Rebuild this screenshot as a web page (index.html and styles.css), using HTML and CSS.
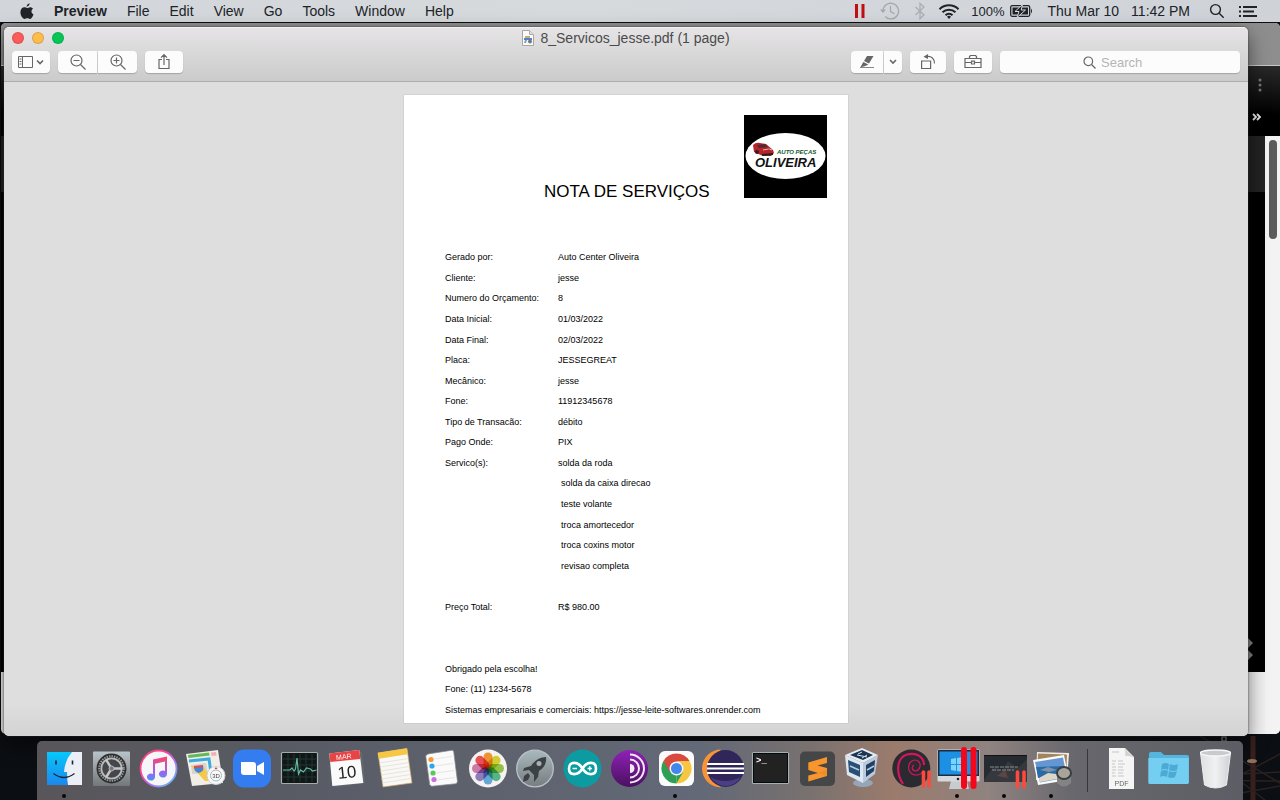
FILE: index.html
```html
<!DOCTYPE html>
<html lang="en">
<head>
<meta charset="utf-8">
<title>8_Servicos_jesse.pdf (1 page)</title>
<link rel="stylesheet" href="styles.css">
</head>
<body>
<header class="menubar">
  <nav class="menus" aria-label="Application menu">
    <button class="menu apple" aria-label="Apple menu"><svg width="14" height="17" viewBox="0 0 14 17"><path fill="#222428" d="M9.600 0.300C9.700 1.900 8.300 3.700 6.700 3.700 6.500 2.100 8 0.500 9.600 0.300ZM10 4.200C11.300 4.200 12.500 4.900 13.100 5.800 10.800 7.200 11 10.300 13.500 11.400 13 13 11.600 15.800 10 15.900 8.900 15.900 8.600 15.300 7.300 15.300 6 15.300 5.600 15.900 4.600 15.900 2.500 15.900 0.400 12.300 0.400 9.300 0.400 6.200 2.300 4.300 4.400 4.300 5.600 4.300 6.400 5 7.200 5 8 5 8.800 4.200 10 4.200Z"/></svg></button>
    <button class="menu app">Preview</button>
    <button class="menu">File</button>
    <button class="menu">Edit</button>
    <button class="menu">View</button>
    <button class="menu">Go</button>
    <button class="menu">Tools</button>
    <button class="menu">Window</button>
    <button class="menu">Help</button>
  </nav>
  <div class="status">
    <svg width="12" height="18" viewBox="0 0 12 18"><path d="M2.500 2v14M9 2v14" stroke="#c40d12" stroke-width="3"/></svg>
    <svg class="history" width="20" height="18" viewBox="0 0 20 18" fill="none" stroke="#a5a8ac" stroke-width="1.300"><path d="M3 9a7.800 7.800 0 1 1 2.200 5.500M10.500 4v5.500l4 2.200"/><path d="M0 7.500h6L3 11z" fill="#a5a8ac" stroke="none"/></svg>
    <svg class="bluetooth" width="12" height="18" viewBox="0 0 12 18" fill="none" stroke="#abafb4" stroke-width="1.300"><path d="M1.500 5 10 13 6 16.500V1.500L10 5 1.500 13"/></svg>
    <svg class="wifi" width="22" height="17" viewBox="0 0 22 17" fill="none" stroke="#202328" stroke-width="2"><path d="M1.500 6.200a13.500 13.500 0 0 1 19 0M4.500 9.300a9.300 9.300 0 0 1 13 0M7.500 12.300a5 5 0 0 1 7 0"/><path d="m11 16-2-2.300a3 3 0 0 1 4 0z" fill="#202328" stroke="none"/></svg>
    <span class="percent">100%</span>
    <svg class="battery" width="24" height="14" viewBox="0 0 24 14"><rect x=".7" y="1.700" width="19" height="10.600" rx="1.500" fill="none" stroke="#202328" stroke-width="1.300"/><path d="M2.500 3.500h15.500v7H2.500z" fill="#202328"/><path d="M21 4.500q2 2.500 0 5z" fill="#202328"/><path d="M12.500.5 5 7.500h4L7 13.500l8.500-7.500h-4.300z" fill="#202328" stroke="#d4d7da" stroke-width="1"/></svg>
    <time class="clock"><span>Thu Mar 10</span><span>11:42 PM</span></time>
    <button class="menu" aria-label="Spotlight"><svg width="16" height="16" viewBox="0 0 16 16" fill="none" stroke="#202328" stroke-width="1.400"><circle cx="6.500" cy="6.500" r="4.900"/><path d="m10.200 10.200 4.500 4.500"/></svg></button>
    <button class="menu center" aria-label="Notification Center"><svg width="18" height="12" viewBox="0 0 18 12" stroke="#202328" stroke-width="1.800"><path d="M0 2h2M4 2h14M0 6.500h2M4 6.500h11M0 11h2M4 11h14"/></svg></button>
  </div>
</header>

<main class="desktop">
  <svg class="pylon" width="100" height="64" viewBox="0 0 100 64" fill="none" stroke="#2b211e" stroke-width="1.500"><path d="M73 0v64" stroke="#3a201b" stroke-width="5"/><path d="M20 0 100 47M100 18 40 50M0 41 100 36M0 44 100 45M20 64 100 50M48 36 85 64"/><ellipse cx="72" cy="25" rx="5" ry="2" fill="#8d7059" stroke="none"/><path d="M42 1h4v4h-4z" stroke="#73777b"/></svg>

  <section class="browser" aria-label="Browser">
    <div class="tabs"></div>
    <div class="bars">
      <svg width="4" height="14" viewBox="0 0 4 14" fill="#777"><circle cx="2" cy="2" r="1.500"/><circle cx="2" cy="7" r="1.500"/><circle cx="2" cy="12" r="1.500"/></svg>
      <svg class="more" width="10" height="8" viewBox="0 0 10 8" fill="none" stroke="#e8e8e8" stroke-width="1.800"><path d="m1 1 3 3-3 3m4-6 3 3-3 3"/></svg>
    </div>
    <div class="site">
      <div class="view"><div class="banner"></div><div class="hero"><svg width="8" height="24" viewBox="0 0 8 24" fill="#858585"><path d="m0 0 6 6-6 6zM0 12l6 6-6 6z"/></svg></div></div>
      <div class="track"><div class="thumb"></div></div>
    </div>
  </section>

  <section class="window" aria-label="Preview">
    <div class="chrome">
      <div class="titlebar">
        <div class="lights"><button class="light close" aria-label="Close"></button><button class="light minimize" aria-label="Minimize"></button><button class="light expand" aria-label="Full screen"></button></div>
        <h1 class="title"><svg width="12" height="16" viewBox="0 0 12 16"><path d="M.5.500h7l4 4v11H.5z" fill="#fafafa" stroke="#a7a7a7"/><path d="M7.500.500v4h4" fill="#ddd" stroke="#aaa"/><path d="M3 6h5v2H3z" fill="#cba878"/><path d="M2 8h8v2H2z" fill="#5682c3"/><path d="m3 10 2 0-1 3H2z" fill="#7b9cc7"/><circle cx="8" cy="11.500" r="2" fill="#737880"/></svg>8_Servicos_jesse.pdf (1 page)</h1>
      </div>
      <div class="toolbar">
        <button class="tool" aria-label="Sidebar"><svg width="28" height="16" viewBox="0 0 28 16" fill="none" stroke="#666"><path d="M1.500 2.500h14v11h-14zM5.500 2.500v11M2.500 5h2M2.500 7.500h2M2.500 10h2"/><path d="m20 6.500 3 3 3-3" stroke-width="1.600"/></svg></button>
        <div class="pair">
          <button class="tool" aria-label="Zoom out"><svg width="16" height="16" viewBox="0 0 16 16" fill="none" stroke="#666" stroke-width="1.200"><circle cx="6.500" cy="6.500" r="5.500"/><path d="m10.500 10.500 5 5M3.500 6.500h6"/></svg></button>
          <button class="tool" aria-label="Zoom in"><svg width="16" height="16" viewBox="0 0 16 16" fill="none" stroke="#666" stroke-width="1.200"><circle cx="6.500" cy="6.500" r="5.500"/><path d="m10.500 10.500 5 5M3.500 6.500h6M6.500 3.500v6"/></svg></button>
        </div>
        <button class="tool" aria-label="Share"><svg width="14" height="18" viewBox="0 0 14 18" fill="none" stroke="#666" stroke-width="1.200"><path d="M5 6.500H2v9h10v-9H9M7 12V2M4 4.700l3-3 3 3"/></svg></button>
        <span class="spring"></span>
        <div class="pair">
          <button class="tool pen" aria-label="Highlight"><svg width="18" height="16" viewBox="0 0 18 16"><path d="M2 13.500h14" stroke="#8a8a8a"/><path d="M9 2h6.500L11 9.500 6 7z" fill="#666"/><path d="m5.300 8 5 2.500-3 1.500-5 1.500z" fill="#666"/></svg></button>
          <button class="tool drop" aria-label="Highlight colours"><svg width="8" height="6" viewBox="0 0 8 6" fill="none" stroke="#666" stroke-width="1.600"><path d="m1 1 3 3 3-3"/></svg></button>
        </div>
        <button class="tool rotate" aria-label="Rotate"><svg width="16" height="18" viewBox="0 0 16 18" fill="none" stroke="#666" stroke-width="1.200"><path d="M1.600 8h9v7.500h-9zM7 3.500c4.500-.5 7.500 2 7.500 7"/><path d="M3.500 3.700 8 1v5z" fill="#666" stroke="none"/></svg></button>
        <button class="tool" aria-label="Markup toolbar"><svg width="18" height="16" viewBox="0 0 18 16" fill="none" stroke="#666" stroke-width="1.200"><path d="M1 4.500h16v9H1zM5.500 4.500v-2l1-1h5l1 1v2M1 8.500h6.500m3 0H17M7.500 7.200h3V10h-3z"/></svg></button>
        <label class="search"><svg width="13" height="13" viewBox="0 0 13 13" fill="none" stroke="#666" stroke-width="1.200"><circle cx="5.300" cy="5.300" r="4.300"/><path d="m8.500 8.500 4 4"/></svg><input type="text" placeholder="Search" aria-label="Search"></label>
      </div>
    </div>
    <div class="canvas">
      <article class="sheet" lang="pt">
        <div class="heading">
          <svg class="logo" width="83" height="83" viewBox="0 0 83 83" role="img" aria-label="Auto Peças Oliveira"><path d="M0 0h83v83H0z"/><ellipse cx="41.500" cy="41" rx="40" ry="23" fill="#fff"/><path d="M9 30q3-3 7-2l6 1 7 6 1 3-3 3-8 0-9-4z" fill="#b92229"/><path d="m13 30 8-1 3 3-9 1z" fill="#4a2c32"/><path d="m19 35 6-1 3 1" stroke="#f0b7b5"/><circle cx="13" cy="37" r="2" fill="#331f21"/><path d="m18 40 11-1" stroke="#222" stroke-width="2"/><text x="33" y="39" class="brand-small">AUTO PEÇAS</text><text x="11" y="52" class="brand">OLIVEIRA</text></svg>
          <h2>NOTA DE SERVIÇOS</h2>
        </div>
        <dl class="details">
          <dt>Gerado por:</dt><dd>Auto Center Oliveira</dd>
          <dt>Cliente:</dt><dd>jesse</dd>
          <dt>Numero do Orçamento:</dt><dd>8</dd>
          <dt>Data Inicial:</dt><dd>01/03/2022</dd>
          <dt>Data Final:</dt><dd>02/03/2022</dd>
          <dt>Placa:</dt><dd>JESSEGREAT</dd>
          <dt>Mecânico:</dt><dd>jesse</dd>
          <dt>Fone:</dt><dd>11912345678</dd>
          <dt>Tipo de Transacão:</dt><dd>débito</dd>
          <dt>Pago Onde:</dt><dd>PIX</dd>
          <dt>Servico(s):</dt><dd>solda da roda</dd>
          <dd class="extra">solda da caixa direcao</dd>
          <dd class="extra">teste volante</dd>
          <dd class="extra">troca amortecedor</dd>
          <dd class="extra">troca coxins motor</dd>
          <dd class="extra">revisao completa</dd>
          <dt class="total">Preço Total:</dt><dd>R$ 980.00</dd>
        </dl>
        <footer class="notes">
          <p>Obrigado pela escolha!</p>
          <p>Fone: (11) 1234-5678</p>
          <p>Sistemas empresariais e comerciais: https://jesse-leite-softwares.onrender.com</p>
        </footer>
      </article>
    </div>
  </section>

  <nav class="dock" aria-label="Dock">
    <button class="app-icon running" aria-label="Finder"><svg viewBox="0 0 47 59"><defs><linearGradient id="finder" x2="0" y2="1"><stop stop-color="#06c8fa"/><stop offset="1" stop-color="#1c87ee"/></linearGradient></defs><path d="M6 11h35v33H6z" fill="url(#finder)"/><path d="M31 11h10v33H27q-1-5-1-13h-3q1-12 8-20z" fill="#eceff5"/><path d="M15 19.500v4M31.500 19.500v4" stroke="#17263d" stroke-width="1.600"/><path d="M12.500 32.500q10.500 8 21 0" fill="none" stroke="#17263d" stroke-width="1.300"/></svg></button>
    <button class="app-icon" aria-label="System Preferences"><svg viewBox="0 0 47 59"><defs><linearGradient id="prefs" x2="0" y2="1"><stop stop-color="#b9c4ca"/><stop offset="1" stop-color="#73777a"/></linearGradient></defs><rect x="5" y="10.500" width="37" height="34.500" rx="1" fill="url(#prefs)"/><circle cx="23.500" cy="27.500" r="15" fill="#2c2e30"/><circle cx="23.500" cy="27.500" r="12.300" fill="none" stroke="#999" stroke-width="2" stroke-dasharray="1.500 1"/><circle cx="23.500" cy="27.500" r="10.200" fill="#43464a" stroke="#bbb" stroke-width="1.800"/><path d="M23.500 27.500 18 18.500m5.500 9h11m-11 0-5.500 9" stroke="#c5c5c5" stroke-width="2.400"/><circle cx="23.500" cy="27.500" r="2.500" fill="#777" stroke="#bbb"/></svg></button>
    <button class="app-icon" aria-label="iTunes"><svg viewBox="0 0 47 59"><defs><linearGradient id="ring" x2="1" y2="1"><stop stop-color="#f04d72"/><stop offset=".35" stop-color="#ff3e9c"/><stop offset=".6" stop-color="#b26cf2"/><stop offset="1" stop-color="#4ccafa"/></linearGradient><linearGradient id="note" x2="0" y2="1"><stop stop-color="#fb4568"/><stop offset=".6" stop-color="#a85cec"/><stop offset="1" stop-color="#4a94f5"/></linearGradient></defs><circle cx="23.500" cy="27.500" r="18" fill="#f6f5f8" stroke="url(#ring)" stroke-width="1.800"/><path fill="url(#note)" d="M18 18.500 32 15.500V33a4 3.500 0 1 1-2-3V20.500L20 22.700V36a4 3.500 0 1 1-2-3z"/></svg></button>
    <button class="app-icon" aria-label="Maps"><svg viewBox="0 0 47 59"><path d="m4 13 32-4 5 33-31 3z" fill="#f1eee5"/><path d="m6 14 21-2.500.6 3L6.500 17z" fill="#62b955"/><path d="m29 11.500 5-.6.6 3.500-5 .6z" fill="#f1adba"/><path d="m7 20 20-2 3 21" fill="none" stroke="#3babdf" stroke-width="3"/><path d="m9 24 15-2 2 10-16 1z" fill="#d8d4ca"/><path d="m9 25 14 15 8 0-9-13z" fill="#f5c944"/><path d="m12 26 9-1q2 5-4 7-5-1-5-6z" fill="#4784d8"/><path d="m12 26 9-1" stroke="#de4a4e" stroke-width="2"/><circle cx="34" cy="34.500" r="9" fill="#f8f8f8" stroke="#cfd1d2"/><circle cx="34" cy="34.500" r="5.500" fill="none" stroke="#9cbac9"/><path d="m32.500 28 1.500-2 1.500 2z" fill="#e33"/><text x="34" y="37" class="three">3D</text></svg></button>
    <button class="app-icon" aria-label="Zoom"><svg viewBox="0 0 47 59"><rect x="4" y="8.500" width="38" height="38" rx="11" fill="#347df0"/><path d="M12 21h12a3 3 0 0 1 3 3v10H15a3 3 0 0 1-3-3z" fill="#fff"/><path d="m28 25 7-4v13l-7-4z" fill="#fff"/></svg></button>
    <button class="app-icon" aria-label="Activity Monitor"><svg viewBox="0 0 47 59"><rect x="5.500" y="11.500" width="36" height="31" rx="1" fill="#101716" stroke="#a5adac" stroke-width="1.200"/><path d="M12 13v28M18 13v28M24 13v28M30 13v28M36 13v28M7 18h33M7 24h33M7 30h33M7 36h33" stroke="#29443f" stroke-width=".7"/><path d="m7 29 7 0 2-2 2 3 1.500-2L21 17l1.500 16 2-4 3 2 3-4 4 1 2 2 4-1" fill="none" stroke="#65b9a4" stroke-width="1.200"/></svg></button>
    <button class="app-icon" aria-label="Calendar"><svg viewBox="0 0 47 59"><path d="m37 11 2 0 3 31-31 4-2-2z" fill="#646a6c"/><path d="m6.300 12.500 30-3.500 4 33-31 3z" fill="#fafafa"/><path d="m6.300 12.500 30-3.500 1 9-30 3z" fill="#e84445"/><g transform="rotate(-6 23 27)"><text x="22" y="18" class="month">MAR</text><text x="23.500" y="37" class="day">10</text></g></svg></button>
    <button class="app-icon" aria-label="Notes"><svg viewBox="0 0 47 59"><path d="m8 12 29-4.500 5 34.500-29 4z" fill="#f9f8f5" stroke="#c3a35b" stroke-width=".7"/><path d="m7.700 11.700 29-4.500 1 6-29 4.500z" fill="#f6c744"/><path d="m9.300 22 29-4.500M10 26l29-4.500M10.500 30l29-4.500M11 34l29-4.500M11.500 38l29-4.500M12 42l29-4.500" stroke="#dddbd8" stroke-width=".7"/></svg></button>
    <button class="app-icon" aria-label="Reminders"><svg viewBox="0 0 47 59"><path d="m11 13 24-3.800q1.500 0 1.700 1.500l3.800 30-1.300 2-24.500 2.600-2-1.600-4-29z" fill="#fafafa" stroke="#888" stroke-width=".7"/><g stroke="#ddd" stroke-width=".7"><path d="m17 18 18-2.500M18 25l18-2.500M19 32l18-2.500M20 39l18-2.500"/></g><circle cx="14" cy="18.500" r="2.600" fill="#f59836"/><circle cx="15" cy="25" r="2.600" fill="#28a9ed"/><circle cx="16" cy="32" r="2.600" fill="#57ca59"/><circle cx="17" cy="38.500" r="2.600" fill="#cc6ee0"/></svg></button>
    <button class="app-icon" aria-label="Photos"><svg viewBox="0 0 47 59"><circle cx="24" cy="27.500" r="19" fill="#f4f3f1"/><g class="petals"><rect x="19.500" y="11.500" width="9" height="16" rx="4.500" fill="#f89b35"/><rect x="19.500" y="11.500" width="9" height="16" rx="4.500" fill="#dbd735" transform="rotate(45 24 27.500)"/><rect x="19.500" y="11.500" width="9" height="16" rx="4.500" fill="#9aca4d" transform="rotate(90 24 27.500)"/><rect x="19.500" y="11.500" width="9" height="16" rx="4.500" fill="#5bbd91" transform="rotate(135 24 27.500)"/><rect x="19.500" y="11.500" width="9" height="16" rx="4.500" fill="#6bafe0" transform="rotate(180 24 27.500)"/><rect x="19.500" y="11.500" width="9" height="16" rx="4.500" fill="#9582c5" transform="rotate(225 24 27.500)"/><rect x="19.500" y="11.500" width="9" height="16" rx="4.500" fill="#d481b5" transform="rotate(270 24 27.500)"/><rect x="19.500" y="11.500" width="9" height="16" rx="4.500" fill="#f0545b" transform="rotate(315 24 27.500)"/></g></svg></button>
    <button class="app-icon" aria-label="Launchpad"><svg viewBox="0 0 47 59"><defs><linearGradient id="launch" x2="0" y2="1"><stop stop-color="#a9b8bd"/><stop offset="1" stop-color="#777d80"/></linearGradient></defs><circle cx="24" cy="27.500" r="18.300" fill="url(#launch)" stroke="#b9c2c8" stroke-width="1.300"/><path d="M35 16q-9 0-15 9l-7 2-1 3 6-1 5 5 0 7 4-5 1-6q8-5 7-14z" fill="#3c4146"/><path d="m17 32-4 3-1 6 5-2 2-4z" fill="#3c4146"/><circle cx="28" cy="22.500" r="2.500" fill="#a9b0b3"/></svg></button>
    <button class="app-icon" aria-label="Arduino"><svg viewBox="0 0 47 59"><circle cx="24.500" cy="27.500" r="19" fill="#0c9ba0"/><path d="M24.500 27.500C20 20 11 20 11 27.500S20 35 24.500 27.500 38 20 38 27.500 29 35 24.500 27.500z" fill="none" stroke="#fff" stroke-width="2.600"/><path d="M14.500 27.500h4.500m10.500 0h4.500M31.800 25.300v4.500" stroke="#fff" stroke-width="1.400"/></svg></button>
    <button class="app-icon" aria-label="Tor Browser"><svg viewBox="0 0 47 59"><defs><linearGradient id="tor" x2="0" y2="1"><stop stop-color="#9021b5"/><stop offset="1" stop-color="#491060"/></linearGradient></defs><circle cx="24.500" cy="27.500" r="18.500" fill="url(#tor)"/><g fill="none" stroke="#f3e8f7" stroke-width="2"><path d="M25 13.500a14 14 0 0 1 0 28M25 18.500a9 9 0 0 1 0 18"/></g><path d="M25 23a4.500 4.500 0 0 1 0 9z" fill="#f3e8f7"/></svg></button>
    <button class="app-icon running" aria-label="Chrome"><svg viewBox="0 0 47 59"><rect x="7" y="10" width="35" height="35" rx="6" fill="#fbfbfb"/><path d="M24.500 27.500 11.500 20a15 15 0 0 1 26 0z" fill="#d84a3e"/><path d="M24.500 27.500 37.500 20a15 15 0 0 1-13 22.500z" fill="#f7c640"/><path d="M24.500 27.500 24.500 42.500a15 15 0 0 1-13-22.500z" fill="#2f9f57"/><path d="M24.500 20h13l-4.500 5z" fill="#f7c640"/><path d="M18 31.200 11.500 20l6.500 3z" fill="#d84a3e"/><path d="M31 31.200 24.500 42.500V34z" fill="#2f9f57"/><circle cx="24.500" cy="27.500" r="7" fill="#f6f6f6"/><circle cx="24.500" cy="27.500" r="5.500" fill="#4387ed"/></svg></button>
    <button class="app-icon" aria-label="Eclipse"><svg viewBox="0 0 47 59"><path d="M22 8.500a19 19 0 0 0 0 38 25 25 0 0 1 0-38z" fill="#f79438"/><circle cx="26.500" cy="27.500" r="18.500" fill="#30265a"/><path d="M11 36q15 8 31 0-6 9-15 9t-16-9z" fill="#4c3e84"/><path d="M8 23h37M8 27.500h37M8 32h37" stroke="#fff" stroke-width="2.200"/></svg></button>
    <button class="app-icon" aria-label="Terminal"><svg viewBox="0 0 47 59"><rect x="6.500" y="11.500" width="36" height="31" rx="1" fill="#222" stroke="#a5b0b5" stroke-width="1.200"/><rect x="7.500" y="12.500" width="34" height="29" fill="none" stroke="#090909"/><text x="10" y="22" class="prompt">&gt;_</text></svg></button>
    <button class="app-icon" aria-label="Sublime Text"><svg viewBox="0 0 47 59"><rect x="7" y="10.500" width="35" height="34.500" rx="5" fill="#454647"/><path d="M34 16 15.300 21.500V29L25 32l-9.700 2.500v6L34 35v-8l-9.500-2.500L34 22z" fill="#f8952e"/><path d="m25 32 9-3v6l-6-2z" fill="#de7a1f" opacity=".35"/></svg></button>
    <button class="app-icon" aria-label="VirtualBox"><svg viewBox="0 0 47 59"><ellipse cx="23" cy="42" rx="10" ry="4" fill="#97a5b9"/><path d="m5 14 17-7 16 7-15 8z" fill="#e5edf5"/><path d="m10 14 12-5 11 5-10 5z" fill="#1b3552"/><path d="m18 13 4-2m0 6 5-3m-10 0 10 2" stroke="#dce6ef"/><path d="m5 14 18 8v20L7 34z" fill="#dde7f0"/><path d="m38 14-15 8v20l12-9z" fill="#b9cade"/><path d="m8 19 12 5v12L9 31z" fill="#284f75"/><path d="m35 19-9 5v12l8-6z" fill="#203f62"/><path d="m10 25 9 4m8 0 7-4" stroke="#b9cad9" stroke-width="1.500"/></svg></button>
    <button class="app-icon" aria-label="Debian"><svg viewBox="0 0 47 59"><circle cx="24.300" cy="27.500" r="19" fill="#292b31"/><path d="M16 43C9 32 9 17 20 13.500 30 11 37 16 37 24" fill="none" stroke="#d5155d" stroke-width="2.200"/><path d="M36 30C33 36 24 35 22 29 20 22 26 17 31 20 35 23 33 29 29 30 25 30 24 26 27 24" fill="none" stroke="#d5155d" stroke-width="1.200"/><path d="M36.500 31v14M42 31v14" stroke="#fb4a3e" stroke-width="3.600" stroke-linecap="round"/></svg></button>
    <button class="app-icon running" aria-label="Windows"><svg viewBox="0 0 47 59"><path d="M17 40h16l2 8H15z" fill="#c8cbd0"/><rect x="3.500" y="8.500" width="42" height="32" rx="1" fill="#d5d9dd"/><path d="M4 9h41v26H4z" fill="#1c2c40"/><path d="M5.500 10.500h38v23h-38z" fill="#1d90e3"/><path d="m17 18 5-1v6h-5zm6-1 6-1v7h-6zm-6 7h5v6l-5-1zm6 0h6v7l-6-1z" fill="#7ed3fb"/><circle cx="24" cy="38" r="1.300" fill="#222"/><path d="M30 9v36M39.500 9v36" stroke="#f5061a" stroke-width="6" stroke-linecap="round"/></svg></button>
    <button class="app-icon running" aria-label="Virtual machine"><svg viewBox="0 0 47 59"><path d="M3 14h43v27H3z" fill="#252b31"/><path d="m3 39 10-14 8 5 6-10 10 7 9-9v23H3z" fill="#35383d"/><path d="m16 35 8-6 3 8z" fill="#5c4542"/><path d="M9 26h28M11 29h22" stroke="#858b8f" stroke-dasharray="4 1"/><path d="M3 14.500h43" stroke="#111"/><path d="M36.500 31v15M43 31v15" stroke="#fb4a3e" stroke-width="3.600" stroke-linecap="round"/></svg></button>
    <button class="app-icon running" aria-label="Preview"><svg viewBox="0 0 47 59"><path d="m9 11 32 1-2 28-31-1z" fill="#f1eee8"/><path d="m10 12.500 29 1-1 25-29-1z" fill="#a1855f"/><path d="m5 19 31-5 5 25-31 5z" fill="#fafafa"/><path d="m7 21 28-4.500 4 20-27 5z" fill="#6497d2"/><path d="m8 26 28-1 2 7-28 5z" fill="#286ba8"/><path d="m11 37 9-5 8 1 10-1 1 4-27 5z" fill="#ded6c4"/><path d="m12 29 8-3 9 3-8 2z" fill="#8092a7"/><path d="M29 31v11q7 7 14 0V31z" fill="#838383"/><ellipse cx="36" cy="32" rx="7" ry="6" fill="#a7a59b" stroke="#393c40" stroke-width="2"/></svg></button>
    <span class="separator"></span>
    <button class="app-icon" aria-label="PDF document"><svg viewBox="0 0 47 59"><path d="M11 7h16l9 9v32H11z" fill="#f5f5f5"/><path d="m26 7 10 10q-5-3-9-2 1-5-1-8z" fill="#d1d1d1"/><path d="M14 11h7M14 20h4m2 0h5M14 23h3m3 0h7M14 26h4m2 0h5M14 29h4m2 0h6M14 32h3m3 0h5M14 35h4m2 0h6" stroke="#bbb" stroke-width=".8"/><text x="23.500" y="45" class="pdf">PDF</text></svg></button>
    <button class="app-icon" aria-label="Windows folder"><svg viewBox="0 0 47 59"><path d="M4 13q0-2 2-2h10l3 3h23q2 0 2 2v26H4z" fill="#55b5df"/><path d="M3.300 17h40.400v24.500q0 1.500-1.500 1.500H4.800q-1.500 0-1.500-1.500z" fill="#74cef2"/><path d="m17 23q4-2 7 0l-1 6q-4-2-7 0zm8 0q4 2 8 0l-1 6q-4 2-8 0zm-9 7q4-2 7 0l-1 6q-4-2-7 0zm8 0q4 2 8 0l-2 6q-4 2-7 0z" fill="#4daad4"/></svg></button>
    <button class="app-icon" aria-label="Trash"><svg viewBox="0 0 47 59"><defs><linearGradient id="bin"><stop stop-color="#dee0e3"/><stop offset=".5" stop-color="#f0f1f2"/><stop offset="1" stop-color="#ced0d4"/></linearGradient></defs><path d="m8.500 12 4 32q11 6 22 0l4-32z" fill="url(#bin)" stroke="#eceef0"/><ellipse cx="23.500" cy="12" rx="15" ry="3" fill="#c8cace" stroke="#f7f7f7" stroke-width="1.300"/></svg></button>
  </nav>
</main>
</body>
</html>
```

FILE: styles.css
```css
* { box-sizing: border-box; }

body {
  margin: 0;
  height: 100vh;
  display: flex;
  flex-direction: column;
  overflow: hidden;
  background: #0b0e12;
  color: #202328;
  font-family: "Liberation Sans", Arial, sans-serif;
  font-size: 14px;
}

button {
  margin: 0;
  padding: 0;
  border: 0;
  background: none;
  color: inherit;
  font: inherit;
}

svg { display: block; flex: none; }

/* Menu bar */
.menubar {
  display: flex;
  justify-content: space-between;
  height: 22px;
  padding: 0 23px 0 20px;
  background: linear-gradient(90deg, #d2d5d9, #d6dadd 45%, #cfd3d8);
}
.menus, .status { display: flex; align-items: center; }
.menus { gap: 20px; }
.menu { line-height: 22px; }
.menu.app { font-weight: bold; }
.percent { margin-left: 11px; font-size: 13px; }
.history { margin-left: 14px; }
.bluetooth { margin-left: 14px; }
.wifi { margin-left: 12px; }
.battery { margin-left: 5px; }
.clock { display: flex; gap: 12px; margin: 0 19px 0 14px; }
.center { margin-left: 14px; }

/* Desktop */
.desktop { position: relative; flex: 1; }
.pylon { position: absolute; right: 0; bottom: 0; }

.browser {
  position: absolute;
  inset: 1px 0 66px 1px;
  display: flex;
  flex-direction: column;
  overflow: hidden;
  border-radius: 5px;
  background: #f1f1f1;
}
.tabs { height: 43px; background: #8e8e8e; border-bottom: 1px solid #c5c9c5; }
.bars {
  display: flex;
  flex-direction: column;
  align-items: flex-end;
  gap: 21px;
  height: 70px;
  padding: 12px 18px;
  background: linear-gradient(#292929, #000 70%);
}
.site { display: flex; flex: 1; }
.view { display: flex; flex-direction: column; flex: 1; margin-bottom: 62px; background: #000; }
.banner { height: 56px; background: #222; }
.hero { display: flex; flex: 1; align-items: flex-end; justify-content: flex-end; padding: 0 10px 11px; }
.track { width: 15px; padding: 4px 3px 4px 4px; background: #f3f3f3; }
.thumb { height: 99px; border-radius: 4px; background: #5b5b5b; }

/* Preview window */
.window {
  position: absolute;
  inset: 5px 32px 64px 4px;
  display: flex;
  flex-direction: column;
  overflow: hidden;
  border-radius: 5px;
  background: #dedede;
  box-shadow: 0 0 2px #333, 0 8px 20px #0008;
}
.chrome {
  padding: 0 8px 8px;
  border-top: 1px solid #f3f2f3;
  border-bottom: 1px solid #aeaeae;
  background: linear-gradient(#e6e4e6, #cbcbcb);
}
.titlebar {
  display: grid;
  grid-template-columns: 1fr auto 1fr;
  align-items: center;
  height: 20px;
  margin-bottom: 3px;
}
.lights { display: flex; gap: 8px; }
.light { width: 12px; height: 12px; border-radius: 50%; border: 1px solid #0002; }
.close { background: #fc5b57; }
.minimize { background: #fdbc4b; }
.expand { background: #06c755; }
.title {
  display: flex;
  align-items: center;
  gap: 6px;
  margin: 0;
  color: #4a4a4a;
  font-size: 14px;
  font-weight: normal;
  line-height: 20px;
}
.toolbar { display: flex; gap: 8px; }
.tool {
  display: flex;
  align-items: center;
  justify-content: center;
  width: 38px;
  height: 22px;
  border-radius: 4px;
  background: #fcfcfc;
  box-shadow: 0 1px 1px #0003;
}
.pair { display: flex; gap: 1px; }
.pair .tool { width: 39px; }
.pair .tool:first-child { border-radius: 4px 0 0 4px; }
.pair .tool:last-child { border-radius: 0 4px 4px 0; }
.pair .pen { width: 32px; }
.pair .drop { width: 18px; }
.rotate { width: 36px; }
.spring { flex: 1; }
.search {
  display: flex;
  align-items: center;
  justify-content: center;
  gap: 5px;
  width: 240px;
  height: 22px;
  border-radius: 4px;
  background: #fcfcfc;
  box-shadow: 0 1px 1px #0003;
}
.search input {
  width: 56px;
  padding: 0;
  border: 0;
  outline: 0;
  background: none;
  color: #333;
  font: 13px "Liberation Sans", Arial, sans-serif;
}
.search input::placeholder { color: #b5b5b5; }

.canvas {
  display: flex;
  flex: 1;
  justify-content: center;
  min-height: 0;
  padding: 13px;
  background: linear-gradient(#dedede 95%, #d3d3d3);
}

/* Service note */
.sheet {
  display: flex;
  flex-direction: column;
  width: 444px;
  padding: 20px 21px 3px 41px;
  background: #fff;
  box-shadow: 0 0 1px #999;
  color: #000;
  font-size: 9px;
}
.heading { display: flex; flex-direction: column; height: 132px; }
.logo { align-self: flex-end; margin-bottom: -16px; }
.heading h2 { margin: 0 0 0 99px; font-size: 17px; font-weight: normal; line-height: 20px; }
.brand { font: italic bold 13px "Liberation Sans", Arial, sans-serif; fill: #111; }
.brand-small { font: italic bold 6px "Liberation Sans", Arial, sans-serif; fill: #13592a; }
.details {
  display: grid;
  flex: 20;
  grid-template-columns: 113px 1fr;
  grid-template-rows: repeat(20, 1fr);
  align-items: center;
  margin: 0;
}
.details dd { grid-column: 2; margin: 0; }
.details .extra { padding-left: 3px; }
.details .total, .details .total + dd { grid-row: 18; }
.notes { display: grid; flex: 3; grid-template-rows: repeat(3, 1fr); align-items: center; }
.notes p { margin: 0; }

/* Dock */
.dock {
  position: absolute;
  bottom: 0;
  left: 50%;
  display: flex;
  height: 59px;
  padding: 0 4px;
  transform: translateX(-50%);
  border-radius: 5px 5px 0 0;
  background: linear-gradient(90deg, #58565a, #585b64 20%, #636977 55%, #78716f 64%, #9b7b6c 71%, #8f8380 79%, #67676d 86%, #5d5e65);
}
.app-icon { position: relative; width: 47px; height: 59px; }
.app-icon svg { width: 47px; height: 59px; }
.running::after {
  content: "";
  position: absolute;
  bottom: 2px;
  left: 21px;
  width: 4px;
  height: 4px;
  border-radius: 50%;
  background: #080808;
}
.separator { width: 1px; height: 43px; margin: 8px 10px 8px 12px; background: #37383c; }
.petals { mix-blend-mode: multiply; }
.petals rect { mix-blend-mode: multiply; }
.three { font: 6px "Liberation Sans", Arial, sans-serif; fill: #444; text-anchor: middle; }
.month { font: 7px "Liberation Sans", Arial, sans-serif; fill: #fff; text-anchor: middle; }
.day { font: 17px "Liberation Sans", Arial, sans-serif; fill: #222; text-anchor: middle; }
.prompt { font: bold 9px "Liberation Mono", monospace; fill: #fff; }
.pdf { font: 7px "Liberation Sans", Arial, sans-serif; fill: #666; text-anchor: middle; }
```
